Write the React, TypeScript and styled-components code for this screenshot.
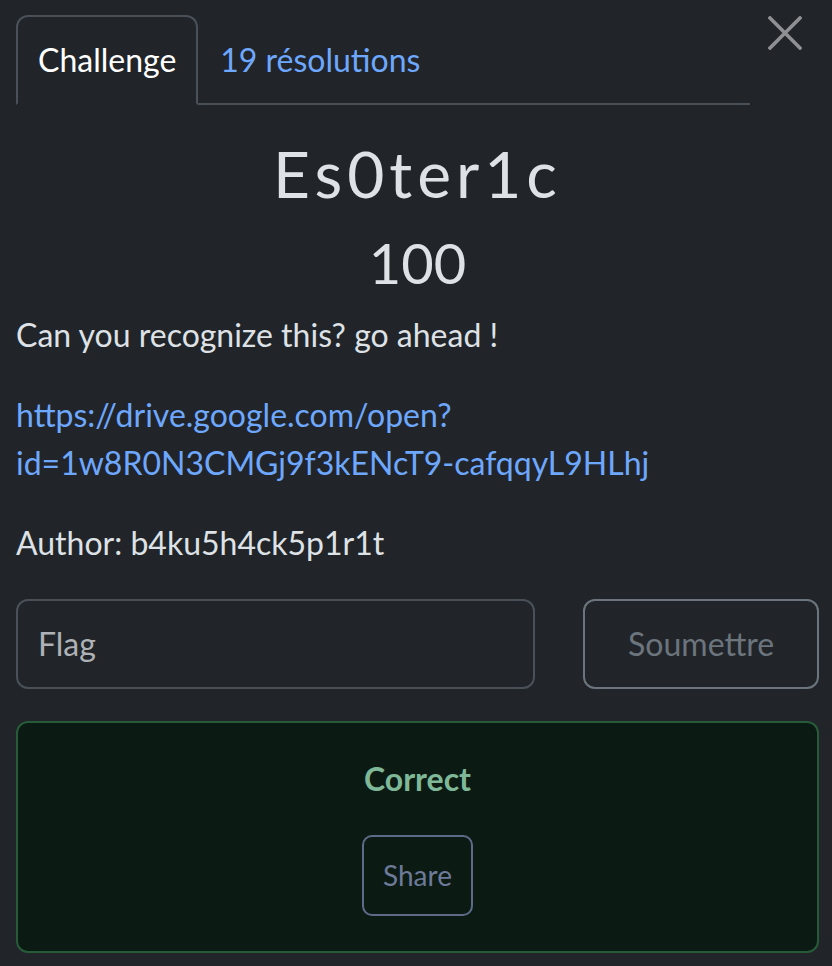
import React from "react";
import styled, { createGlobalStyle } from "styled-components";

const GlobalStyle = createGlobalStyle`
  html, body {
    margin: 0;
    padding: 0;
    background: #212529;
  }
  body {
    font-family: Lato, "Open Sans", sans-serif;
    color: #dee2e6;
  }
  * { box-sizing: border-box; }
`;

const Page = styled.div`
  padding: 0 13px 14px 16px;
  min-height: 966px;
  background: #212529;
`;

const Header = styled.div`
  display: flex;
  align-items: flex-start;
`;

const Tabs = styled.nav`
  flex: 1;
  display: flex;
  margin-top: 15px;
  border-bottom: 2px solid #495057;
`;

const Tab = styled.a<{ $active?: boolean }>`
  display: block;
  padding: 19px 20px;
  margin-bottom: -2px;
  font-size: 32px;
  line-height: 48px;
  text-decoration: none;
  border: 2px solid transparent;
  border-radius: 12px 12px 0 0;
  color: ${(p) => (p.$active ? "#ffffff" : "#6ea8fe")};
  border-color: ${(p) =>
    p.$active ? "#495057 #495057 #212529" : "transparent"};
  background: ${(p) => (p.$active ? "#212529" : "transparent")};
  cursor: pointer;
`;

const CloseButton = styled.button`
  width: 69px;
  height: 66px;
  padding: 0;
  border: 0;
  background: transparent;
  display: flex;
  align-items: center;
  justify-content: center;
  cursor: pointer;
`;

const Title = styled.h2`
  margin: 0 0 16px;
  padding-top: 31px;
  font-size: 64px;
  line-height: 1.2;
  font-weight: 400;
  letter-spacing: 5px;
  text-align: center;
  color: #dee2e6;
`;

const Value = styled.h3`
  margin: 0 0 15px;
  font-size: 56px;
  line-height: 1.2;
  font-weight: 400;
  text-align: center;
  color: #dee2e6;
`;

const Paragraph = styled.p`
  margin: 0 0 32px;
  font-size: 32px;
  line-height: 48px;
  color: #dee2e6;
`;

const Link = styled.a`
  color: #6ea8fe;
  text-decoration: none;
  word-break: break-all;
`;

const FormRow = styled.form`
  display: grid;
  grid-template-columns: calc((100% + 48px) * 8 / 12 - 48px) 1fr;
  column-gap: 48px;
  margin: 0;
`;

const FlagInput = styled.input`
  height: 90px;
  width: 100%;
  padding: 19px 20px;
  border: 2px solid #495057;
  border-radius: 12px;
  background: #212529;
  font-family: Lato, sans-serif;
  font-size: 32px;
  line-height: 48px;
  color: #dee2e6;
  outline: none;
  &::placeholder {
    color: #aeb2b6;
  }
`;

const SubmitButton = styled.button`
  height: 90px;
  width: 100%;
  border: 2px solid #6c757d;
  border-radius: 12px;
  background: transparent;
  font-family: Lato, sans-serif;
  font-size: 32px;
  line-height: 48px;
  color: #6c757d;
  cursor: pointer;
`;

const Alert = styled.div`
  margin-top: 32px;
  padding: 32px 32px 35px;
  border: 2px solid #275a39;
  border-radius: 12px;
  background: #0b1a13;
  display: flex;
  flex-direction: column;
  align-items: center;
  gap: 32px;
`;

const AlertTitle = styled.strong`
  font-size: 32px;
  line-height: 48px;
  font-weight: 700;
  color: #7fb898;
`;

const ShareButton = styled.button`
  height: 81px;
  padding: 0 19px;
  border: 2px solid #5d6b89;
  border-radius: 10px;
  background: transparent;
  font-family: Lato, sans-serif;
  font-size: 28px;
  line-height: 42px;
  color: #6d7b99;
  cursor: pointer;
`;

export default function App() {
  return (
    <>
      <GlobalStyle />
      <Page>
        <Header>
          <Tabs>
            <Tab $active>Challenge</Tab>
            <Tab>19 résolutions</Tab>
          </Tabs>
          <CloseButton aria-label="Close">
            <svg width="34" height="34" viewBox="0 0 34 34">
              <path
                d="M2 2 L32 32 M32 2 L2 32"
                stroke="#8e9094"
                strokeWidth="3.6"
                strokeLinecap="square"
              />
            </svg>
          </CloseButton>
        </Header>

        <Title>Es0ter1c</Title>
        <Value>100</Value>

        <Paragraph>Can you recognize this? go ahead !</Paragraph>
        <Paragraph>
          <Link href="#">
            https://drive.google.com/open?
            <br />
            id=1w8R0N3CMGj9f3kENcT9-cafqqyL9HLhj
          </Link>
        </Paragraph>
        <Paragraph>Author: b4ku5h4ck5p1r1t</Paragraph>

        <FormRow onSubmit={(e) => e.preventDefault()}>
          <FlagInput placeholder="Flag" />
          <SubmitButton type="submit">Soumettre</SubmitButton>
        </FormRow>

        <Alert>
          <AlertTitle>Correct</AlertTitle>
          <ShareButton>Share</ShareButton>
        </Alert>
      </Page>
    </>
  );
}
